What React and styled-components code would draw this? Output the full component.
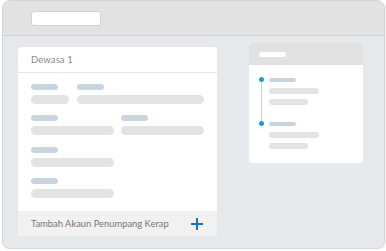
import React from "react";
import styled, { createGlobalStyle } from "styled-components";

const GlobalStyle = createGlobalStyle`
  html, body {
    margin: 0;
    padding: 0;
    background: #ffffff;
  }
  body {
    font-family: Lato, "Open Sans", Arial, sans-serif;
  }
`;

const Window = styled.div`
  box-sizing: border-box;
  margin-left: 2px;
  width: 383px;
  height: 249px;
  border: 1px solid #d4d4d4;
  border-radius: 8px;
  overflow: hidden;
  background: #e6e9ec;
  box-shadow: 1px 1px 2px rgba(0, 0, 0, 0.06);
  display: flex;
  flex-direction: column;
`;

const TopBar = styled.div`
  box-sizing: border-box;
  height: 35px;
  flex-shrink: 0;
  background: #e2e2e2;
  border-bottom: 1px solid #d3d3d3;
  padding: 10px 28px;
`;

const UrlField = styled.div`
  box-sizing: border-box;
  width: 70px;
  height: 15px;
  background: #ffffff;
  border: 1px solid #d2d2d2;
  border-radius: 3px;
`;

const Content = styled.div`
  display: flex;
  align-items: flex-start;
  gap: 32px;
  padding-left: 15px;
`;

const FormCard = styled.div`
  width: 199px;
  margin-top: 11px;
  background: #ffffff;
  border-radius: 4px;
  overflow: hidden;
`;

const CardTitle = styled.div`
  box-sizing: border-box;
  height: 26px;
  padding: 0 13px;
  border-bottom: 1px solid #e6e6e6;
  display: flex;
  align-items: center;
  font-size: 9.5px;
  color: #8a8a8a;
  letter-spacing: 0.1px;
`;

const FormBody = styled.div`
  padding: 11px 13px 13px;
  display: flex;
  flex-direction: column;
  gap: 11.4px;
`;

const FieldRow = styled.div`
  display: grid;
  grid-template-columns: ${(p) => p.$cols || "1fr 1fr"};
  gap: ${(p) => p.$gap || 7}px;
`;

const Field = styled.div`
  display: flex;
  flex-direction: column;
  gap: 5px;
`;

const Label = styled.div`
  width: ${(p) => p.$w || 27}px;
  height: ${(p) => p.$h || 6}px;
  border-radius: 4px;
  background: #c8d5e1;
`;

const Bar = styled.div`
  width: ${(p) => (p.$w ? `${p.$w}px` : "100%")};
  height: ${(p) => p.$h || 9}px;
  border-radius: 5px;
  background: #e3e3e3;
`;

const CardFooter = styled.div`
  box-sizing: border-box;
  height: 25px;
  background: #f1f1f1;
  padding: 0 13px 0 13px;
  display: flex;
  align-items: center;
  justify-content: space-between;
  font-size: 9.4px;
  color: #777777;
`;

const Side = styled.div`
  width: 114px;
  margin-top: 7px;
  display: flex;
  flex-direction: column;
`;

const SummaryCard = styled.div`
  background: #ffffff;
  border-radius: 4px;
  overflow: hidden;
`;

const SummaryHead = styled.div`
  height: 22px;
  background: #e1e1e1;
  padding-left: 10px;
  display: flex;
  align-items: center;
`;

const HeadPill = styled.div`
  width: 27px;
  height: 5px;
  border-radius: 3px;
  background: #ffffff;
`;

const Timeline = styled.div`
  position: relative;
  padding: 12.5px 0 14px 20px;
  display: flex;
  flex-direction: column;
  gap: 16.5px;
`;

const TimeLine = styled.div`
  position: absolute;
  left: 11.5px;
  top: 14.5px;
  height: 46px;
  width: 1px;
  background: #cfcfcf;
`;

const Stop = styled.div`
  position: relative;
  display: flex;
  flex-direction: column;
  gap: 6px;

  &::before {
    content: "";
    position: absolute;
    left: -10.5px;
    top: -0.5px;
    width: 5px;
    height: 5px;
    border-radius: 50%;
    background: #1b9ae4;
  }
`;

const StopBars = styled.div`
  display: flex;
  flex-direction: column;
  gap: 5px;
`;

const Ghost = styled.div`
  height: 25px;
  background: #e7eaed;
  border-radius: 0 0 3px 3px;
`;

const PlusIcon = () => (
  <svg width="14" height="14" viewBox="0 0 14 14">
    <path d="M7 1v12M1 7h12" stroke="#1d6fd2" strokeWidth="2" />
  </svg>
);

export default function App() {
  return (
    <>
      <GlobalStyle />
      <Window>
        <TopBar>
          <UrlField />
        </TopBar>
        <Content>
          <FormCard>
            <CardTitle>Dewasa 1</CardTitle>
            <FormBody>
              <FieldRow $cols="38px 1fr" $gap={8}>
                <Field>
                  <Label />
                  <Bar />
                </Field>
                <Field>
                  <Label />
                  <Bar />
                </Field>
              </FieldRow>
              <FieldRow>
                <Field>
                  <Label />
                  <Bar />
                </Field>
                <Field>
                  <Label />
                  <Bar />
                </Field>
              </FieldRow>
              <FieldRow>
                <Field>
                  <Label />
                  <Bar />
                </Field>
              </FieldRow>
              <FieldRow>
                <Field>
                  <Label />
                  <Bar />
                </Field>
              </FieldRow>
            </FormBody>
            <CardFooter>
              <span>Tambah Akaun Penumpang Kerap</span>
              <PlusIcon />
            </CardFooter>
          </FormCard>

          <Side>
            <SummaryCard>
              <SummaryHead>
                <HeadPill />
              </SummaryHead>
              <Timeline>
                <TimeLine />
                <Stop>
                  <Label $h={4.5} />
                  <StopBars>
                    <Bar $w={50} $h={6} />
                    <Bar $w={39} $h={6} />
                  </StopBars>
                </Stop>
                <Stop>
                  <Label $h={4.5} />
                  <StopBars>
                    <Bar $w={50} $h={6} />
                    <Bar $w={39} $h={6} />
                  </StopBars>
                </Stop>
              </Timeline>
            </SummaryCard>
            <Ghost />
          </Side>
        </Content>
      </Window>
    </>
  );
}
